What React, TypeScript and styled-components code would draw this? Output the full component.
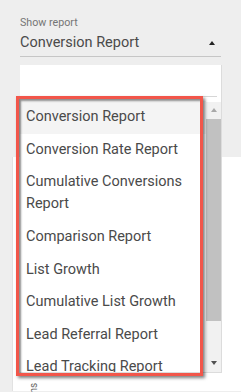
import React from 'react';
import styled, { createGlobalStyle } from 'styled-components';

const reports = [
  'Conversion Report',
  'Conversion Rate Report',
  'Cumulative Conversions Report',
  'Comparison Report',
  'List Growth',
  'Cumulative List Growth',
  'Lead Referral Report',
  'Lead Tracking Report',
];

const App: React.FC = () => {
  return (
    <Page>
      <GlobalStyle />
      <Header>
        <FieldLabel>Show report</FieldLabel>
        <SelectRow>
          <SelectValue>Conversion Report</SelectValue>
          <Caret $up />
        </SelectRow>
      </Header>

      <Card>
        <VerticalLabel>Conversions</VerticalLabel>
      </Card>

      <Menu>
        <SearchArea />
        <MenuBody>
          <OptionList>
            {reports.map((name, i) => (
              <Option key={name} $active={i === 0}>
                {name}
              </Option>
            ))}
          </OptionList>
          <Scrollbar>
            <ScrollButton>
              <Caret $up $light />
            </ScrollButton>
            <Thumb />
            <ScrollButton>
              <Caret />
            </ScrollButton>
          </Scrollbar>
        </MenuBody>
      </Menu>

      <Highlight />
    </Page>
  );
};

export default App;

const GlobalStyle = createGlobalStyle`
  html, body {
    margin: 0;
    padding: 0;
    background: #eeeeee;
    font-family: Roboto, "Liberation Sans", sans-serif;
  }
`;

const Page = styled.div`
  position: relative;
  width: 241px;
  height: 392px;
  overflow: hidden;
  background: #eeeeee;
`;

const Header = styled.div`
  padding: 16px 20px 0 20px;
  width: 201px;
`;

const FieldLabel = styled.div`
  font-size: 10.7px;
  line-height: 13px;
  color: #757575;
`;

const SelectRow = styled.div`
  margin-top: 4px;
  height: 20px;
  padding: 0 6px 3px 0;
  display: flex;
  align-items: center;
  justify-content: space-between;
  border-bottom: 1px solid #c6c6c6;
`;

const SelectValue = styled.span`
  font-size: 14.5px;
  line-height: 20px;
  color: #4a4a4a;
`;

const Caret = styled.span<{ $up?: boolean; $light?: boolean }>`
  width: 0;
  height: 0;
  border-left: 3.5px solid transparent;
  border-right: 3.5px solid transparent;
  ${(p) =>
    p.$up
      ? `border-bottom: 4px solid ${p.$light ? '#a8a8a8' : '#222'};`
      : `border-top: 4px solid #505050;`}
`;

const Card = styled.div`
  margin: 100px 0 0 12px;
  height: 234px;
  background: #ffffff;
  border-left: 1px solid #e2e2e2;
  padding: 226px 0 0 16px;
  box-sizing: border-box;
`;

const VerticalLabel = styled.div`
  writing-mode: vertical-rl;
  transform: rotate(180deg);
  font-size: 10px;
  line-height: 10px;
  color: #666;
  height: 60px;
  text-align: right;
`;

const Menu = styled.div`
  position: absolute;
  left: 20px;
  top: 65px;
  width: 202px;
  height: 308px;
  background: #ffffff;
  border-right: 1px solid #dcdcdc;
  border-bottom: 1px solid #dcdcdc;
  box-sizing: border-box;
  display: flex;
  flex-direction: column;
`;

const SearchArea = styled.div`
  height: 31px;
  margin-right: 4px;
  border-bottom: 1px solid #d6d6d6;
`;

const MenuBody = styled.div`
  flex: 1;
  display: flex;
  min-height: 0;
`;

const OptionList = styled.div`
  flex: 1;
  overflow: hidden;
  padding-top: 4px;
`;

const Option = styled.div<{ $active?: boolean }>`
  padding: 5.3px 6px;
  font-size: 14.5px;
  line-height: 22px;
  color: #4a4a4a;
  background: ${(p) => (p.$active ? '#f4f4f4' : '#ffffff')};
`;

const Scrollbar = styled.div`
  width: 15px;
  margin-top: 5px;
  background: #f1f1f1;
  display: flex;
  flex-direction: column;
  align-items: stretch;
`;

const ScrollButton = styled.div`
  height: 15px;
  display: flex;
  align-items: center;
  justify-content: center;
  &:last-child {
    margin-top: auto;
    margin-bottom: 2px;
  }
`;

const Thumb = styled.div`
  margin-top: 2px;
  height: 202px;
  background: #c1c1c1;
`;

const Highlight = styled.div`
  position: absolute;
  left: 16px;
  top: 96px;
  width: 187px;
  height: 280px;
  box-sizing: border-box;
  border: 3px solid #f2564a;
  box-shadow: 2px 2px 3px rgba(0, 0, 0, 0.5), inset 2px 2px 2px rgba(0, 0, 0, 0.45);
  pointer-events: none;
`;
